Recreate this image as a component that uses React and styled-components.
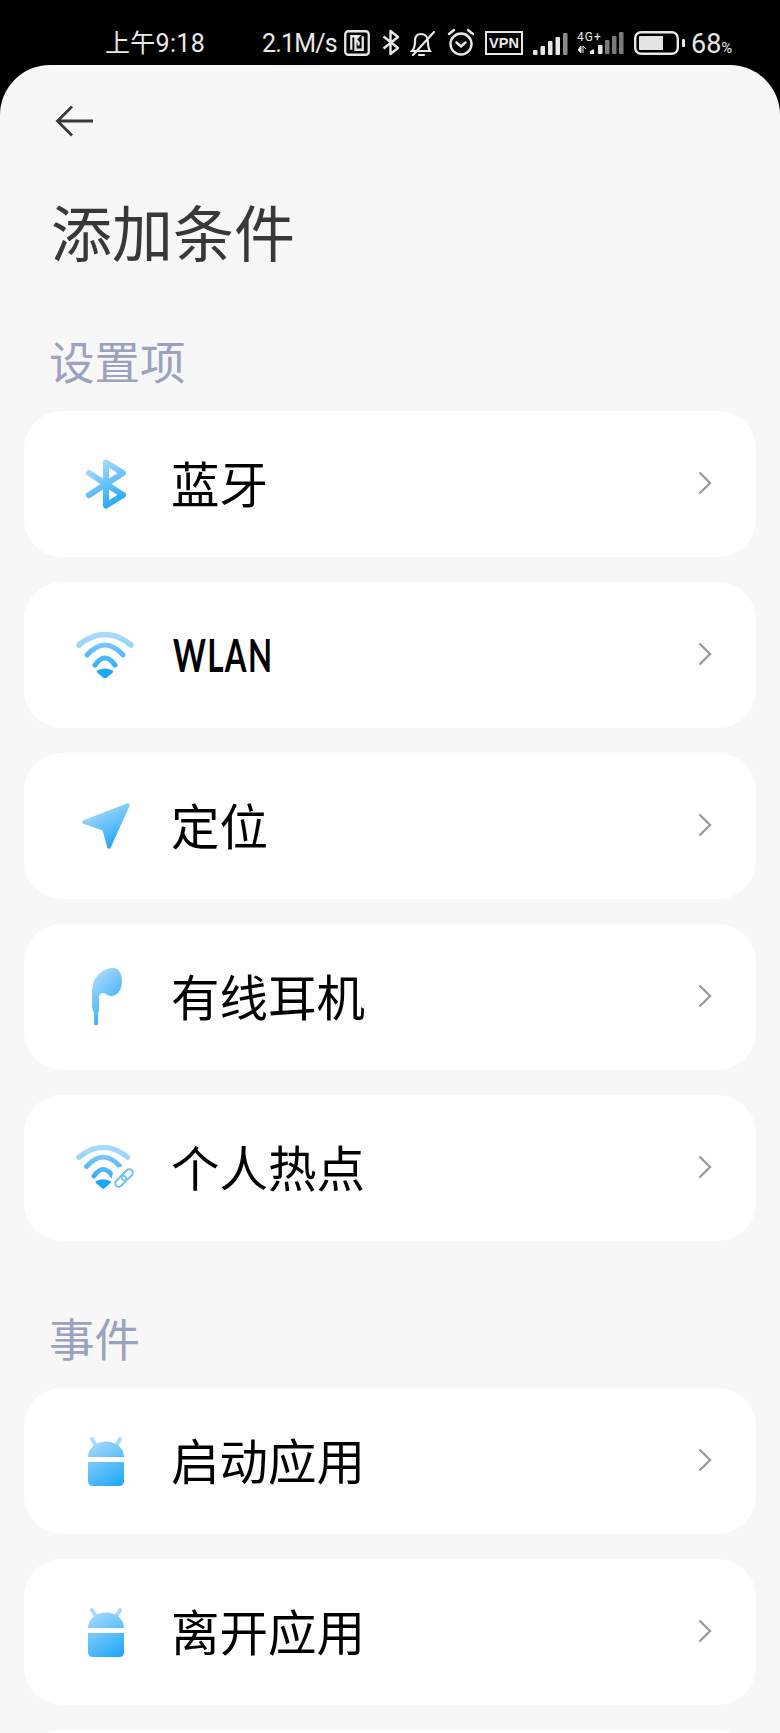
import React from 'react';
import styled, { createGlobalStyle } from 'styled-components';

const GlobalStyle = createGlobalStyle`
  html, body {
    margin: 0;
    padding: 0;
    background: #000;
    height: 1733px;
    overflow: hidden;
  }
  * { box-sizing: border-box; }
`;

const Page = styled.div`
  width: 780px;
  height: 1733px;
  overflow: hidden;
  background: #000;
  font-family: "Noto Sans CJK SC", "Noto Sans", sans-serif;
`;

const StatusBar = styled.div`
  height: 65px;
  padding: 28px 0 0 105px;
  display: flex;
  align-items: flex-start;
  color: #e8e8e8;
  font-family: Roboto, "Noto Sans CJK SC", sans-serif;
`;

const StatusText = styled.span`
  font-size: ${(p) => p.size || 25}px;
  line-height: 32px;
  width: ${(p) => p.width}px;
  margin-left: ${(p) => p.left || 0}px;
  letter-spacing: ${(p) => p.spacing || 0}px;
  white-space: nowrap;
`;

const SmallUnit = styled.small`
  font-size: 15px;
`;

const StatusIcon = styled.svg`
  display: block;
  flex: none;
  margin-left: ${(p) => p.left || 0}px;
  margin-top: ${(p) => p.top || 0}px;
`;

const VpnBox = styled.span`
  width: 38px;
  height: 24px;
  margin: 3px 0 0 10px;
  border: 2.5px solid #e8e8e8;
  display: flex;
  align-items: center;
  justify-content: center;
  font: 700 14.5px/1 "Liberation Sans", sans-serif;
`;

const Sheet = styled.main`
  background: #f7f7f7;
  border-radius: 50px 50px 0 0;
  padding: 40px 24px 0;
`;

const BackButton = styled.div`
  height: 30px;
  padding-left: 31px;
`;

const BackSvg = styled.svg`
  display: block;
`;

const Title = styled.h1`
  margin: 57px 0 0 27px;
  font-size: 61px;
  line-height: 78px;
  font-weight: 400;
  color: #383838;
`;

const SectionLabel = styled.h2`
  margin: ${(p) => p.top}px 0 0 25px;
  font-size: 45.5px;
  line-height: 60px;
  height: 60px;
  font-weight: 400;
  color: #9aa2bd;
`;

const CardList = styled.div`
  display: flex;
  flex-direction: column;
  gap: 25px;
  margin-top: 21px;
`;

const Card = styled.div`
  height: 146px;
  flex: none;
  background: #fff;
  border-radius: 38px;
  padding: 0 44px 0 40px;
  display: flex;
  align-items: center;
`;

const IconSlot = styled.div`
  width: 84px;
  flex: none;
  display: flex;
  justify-content: center;
  margin-right: 23px;
`;

const Label = styled.span`
  flex: 1;
  font-size: 48.5px;
  line-height: 60px;
  margin-bottom: 4px;
  color: #000;
`;

const LatinLabel = styled.span`
  display: inline-block;
  margin-left: 2px;
  font-family: Lato, sans-serif;
  font-weight: 700;
  font-size: 46px;
  transform: scaleX(0.68);
  transform-origin: left center;
  letter-spacing: 2px;
`;

const Chevron = styled.svg`
  display: block;
  flex: none;
  margin-bottom: 2px;
`;

const Gradient = ({ id }) => (
  <defs>
    <linearGradient id={id} x1="0.15" y1="0" x2="0.7" y2="1">
      <stop offset="0" stopColor="#b5defb" />
      <stop offset="1" stopColor="#1fa6fa" />
    </linearGradient>
  </defs>
);

const BluetoothIcon = () => (
  <svg width="42" height="50" viewBox="0 0 42 50">
    <defs>
      <linearGradient id="bt" gradientUnits="userSpaceOnUse" x1="8" y1="2" x2="30" y2="48">
        <stop offset="0" stopColor="#b5defb" />
        <stop offset="1" stopColor="#1fa6fa" />
      </linearGradient>
    </defs>
    <path d="M4 14 L38 36 L21 46.5 L21 3.5 L38 14 L4 36" fill="none" stroke="url(#bt)" strokeWidth="6" strokeLinecap="round" strokeLinejoin="round" />
  </svg>
);

const WifiArcs = ({ prefix }) => (
  <>
    <path d="M3 13 Q29 -8 55 13" fill="none" stroke={`url(#${prefix}a)`} strokeWidth="5.5" strokeLinecap="round" />
    <path d="M11 23 Q29 3 47 23" fill="none" stroke={`url(#${prefix}b)`} strokeWidth="5" strokeLinecap="round" />
    <path d="M19 33 Q29 19 39 33" fill="none" stroke={`url(#${prefix}b)`} strokeWidth="5" strokeLinecap="round" />
    <path d="M22 39.5 Q29 36 36 39.5 L29 45.5 Z" fill="#1fa6fa" stroke="#1fa6fa" strokeWidth="2.5" strokeLinejoin="round" />
  </>
);

const WifiGradients = ({ prefix }) => (
  <defs>
    <linearGradient id={`${prefix}a`} gradientUnits="userSpaceOnUse" x1="0" y1="0" x2="0" y2="22">
      <stop offset="0" stopColor="#a9dbfb" />
      <stop offset="1" stopColor="#8ccffb" />
    </linearGradient>
    <linearGradient id={`${prefix}b`} gradientUnits="userSpaceOnUse" x1="0" y1="8" x2="0" y2="36">
      <stop offset="0" stopColor="#82cbfb" />
      <stop offset="1" stopColor="#2fadfa" />
    </linearGradient>
  </defs>
);

const WifiIcon = () => (
  <svg width="60" height="46" viewBox="0 0 60 46">
    <WifiGradients prefix="wf" />
    <WifiArcs prefix="wf" />
  </svg>
);

const HotspotIcon = () => (
  <svg width="60" height="46" viewBox="0 0 60 46">
    <WifiGradients prefix="hs" />
    <g transform="scale(0.94)">
      <WifiArcs prefix="hs" />
    </g>
    <circle cx="48" cy="33" r="12" fill="#fff" />
    <g transform="rotate(-45 48 33)" fill="none" stroke="#6cc2fa" strokeWidth="2">
      <rect x="37" y="29.5" width="13" height="7" rx="3.5" />
      <rect x="46" y="29.5" width="13" height="7" rx="3.5" />
    </g>
  </svg>
);

const LocationIcon = () => (
  <svg width="50" height="48" viewBox="0 0 50 48">
    <Gradient id="loc" />
    <path d="M47 3 L3 20 L23 27 L28 45 Z" fill="url(#loc)" stroke="url(#loc)" strokeWidth="3.5" strokeLinejoin="round" />
  </svg>
);

const EarphoneIcon = () => (
  <svg width="32" height="58" viewBox="0 0 32 58">
    <Gradient id="ear" />
    <path d="M2 24 C2 9 12 0 23 0 C29 0 32 6 32 13 C32 22 27 28 21 28 C17 28 16 25 13 25 C10 25 9 27 9 31 L9 41 C9 43 8.5 44 8 45 L8 57 L4 57 L4 45 C3 43 2 41 2 38 Z" fill="url(#ear)" />
  </svg>
);

const AndroidIcon = ({ id }) => (
  <svg width="38" height="50" viewBox="0 0 38 50">
    <defs>
      <linearGradient id={id} gradientUnits="userSpaceOnUse" x1="4" y1="0" x2="34" y2="50">
        <stop offset="0" stopColor="#b5defb" />
        <stop offset="1" stopColor="#1fa6fa" />
      </linearGradient>
    </defs>
    <path d="M5 3 L8 8 M33 3 L30 8" fill="none" stroke="#a9dbfb" strokeWidth="4" strokeLinecap="round" />
    <path d="M1 21 C1 12 9 5.5 19 5.5 C29 5.5 37 12 37 21 Z" fill={`url(#${id})`} />
    <path d="M1 26 H37 V45 Q37 50 32 50 H6 Q1 50 1 45 Z" fill={`url(#${id})`} />
  </svg>
);

const ChevronIcon = () => (
  <Chevron width="14" height="24" viewBox="0 0 14 24">
    <path d="M1.5 1.5 L12 12 L1.5 22.5" fill="none" stroke="#9c9c9c" strokeWidth="2.4" />
  </Chevron>
);

const BackIcon = () => (
  <BackSvg width="38" height="32" viewBox="0 0 38 32">
    <path d="M38 16 H3 M17 1.5 L2.5 16 L17 30.5" fill="none" stroke="#3a3a3a" strokeWidth="2.8" />
  </BackSvg>
);

const Row = ({ icon, label, latin }) => (
  <Card>
    <IconSlot>{icon}</IconSlot>
    <Label>{latin ? <LatinLabel>{label}</LatinLabel> : label}</Label>
    <ChevronIcon />
  </Card>
);

const StatusIcons = () => (
  <>
    <StatusIcon left={0} top={2} width="26" height="26" viewBox="0 0 25 25" fill="none" stroke="#e8e8e8" strokeWidth="2.2">
      <rect x="1.2" y="1.2" width="22.6" height="22.6" rx="3" />
      <path d="M7 19 V6 H14 L11 9 M18 6 V19 H11 V9 L14 12 V15" />
    </StatusIcon>
    <StatusIcon left={12} top={1} width="18" height="27" viewBox="0 0 18 27" fill="none" stroke="#e8e8e8" strokeWidth="2.4" strokeLinejoin="round">
      <path d="M1.5 7.5 L16 19 L8.5 25 V2 L16 8 L1.5 19.5" />
    </StatusIcon>
    <StatusIcon left={10} top={2} width="26" height="27" viewBox="0 0 26 27" fill="none" stroke="#e8e8e8" strokeWidth="2.2" strokeLinecap="round">
      <path d="M2 21 H20 C18 18 18 15 18 12 C18 7 15 4 11 4 C7 4 5 7 5 11 C5 15 4 19 2 21 Z M9 25 H14 M3 25 L24 2" />
    </StatusIcon>
    <StatusIcon left={11} width="28" height="28" viewBox="0 0 28 28" fill="none" stroke="#e8e8e8" strokeWidth="2.4" strokeLinecap="round">
      <circle cx="14" cy="16" r="10.5" />
      <path d="M9.5 14.5 L14 18.5 L18.5 14.5 M2 6 L7 2 M26 6 L21 2" />
    </StatusIcon>
    <VpnBox>VPN</VpnBox>
    <StatusIcon left={10} top={4} width="36" height="24" viewBox="0 0 36 24">
      <rect x="0" y="18" width="4.5" height="5" rx="1" fill="#e8e8e8" />
      <rect x="7.5" y="14" width="4.5" height="9" rx="1" fill="#e8e8e8" />
      <rect x="15" y="9" width="4.5" height="14" rx="1" fill="#e8e8e8" />
      <rect x="22.5" y="5" width="4.5" height="18" rx="1" fill="#e8e8e8" />
      <rect x="30" y="1" width="4.5" height="22" rx="1" fill="#8a8a8a" />
    </StatusIcon>
    <StatusIcon left={8} top={3} width="49" height="24" viewBox="0 0 49 24">
      <text x="0" y="10" fontFamily="Roboto, sans-serif" fontSize="12" letterSpacing="1" fill="#e8e8e8">4G+</text>
      <path d="M4 15 V22 L1 19 Z M6 15 V22 M6 15 L9 18" fill="#e8e8e8" stroke="#e8e8e8" strokeWidth="1" />
      <path d="M13 23 V20 L17 18 V23 Z" fill="#e8e8e8" />
      <rect x="21" y="14" width="4.5" height="9" rx="1" fill="#e8e8e8" />
      <rect x="28" y="9" width="4.5" height="14" rx="1" fill="#7a7a7a" />
      <rect x="35" y="5" width="4.5" height="18" rx="1" fill="#7a7a7a" />
      <rect x="42" y="1" width="4.5" height="22" rx="1" fill="#7a7a7a" />
    </StatusIcon>
    <StatusIcon left={8} top={3} width="51" height="24" viewBox="0 0 51 24">
      <rect x="1.2" y="1.2" width="42.6" height="21.6" rx="6" fill="none" stroke="#e8e8e8" strokeWidth="2.4" />
      <path d="M6 5 H29 V19 H6 Q5 19 5 18 V6 Q5 5 6 5 Z" fill="#e4e4e4" />
      <rect x="48" y="8" width="3" height="8" rx="1" fill="#e8e8e8" />
    </StatusIcon>
    <StatusText size={27} width={40} left={6}>68<SmallUnit>%</SmallUnit></StatusText>
  </>
);

const settings = [
  { label: '蓝牙', icon: <BluetoothIcon /> },
  { label: 'WLAN', icon: <WifiIcon />, latin: true },
  { label: '定位', icon: <LocationIcon /> },
  { label: '有线耳机', icon: <EarphoneIcon /> },
  { label: '个人热点', icon: <HotspotIcon /> },
];

const events = [
  { label: '启动应用', icon: <AndroidIcon id="and1" /> },
  { label: '离开应用', icon: <AndroidIcon id="and2" /> },
];

const App = () => (
  <Page>
    <GlobalStyle />
    <StatusBar>
      <StatusText width={157} spacing={0.3}>上午9:18</StatusText>
      <StatusText width={82} spacing={-0.8}>2.1M/s</StatusText>
      <StatusIcons />
    </StatusBar>
    <Sheet>
      <BackButton>
        <BackIcon />
      </BackButton>
      <Title>添加条件</Title>
      <SectionLabel top={60}>设置项</SectionLabel>
      <CardList>
        {settings.map((item) => (
          <Row key={item.label} {...item} />
        ))}
      </CardList>
      <SectionLabel top={66}>事件</SectionLabel>
      <CardList>
        {events.map((item) => (
          <Row key={item.label} {...item} />
        ))}
        <Card />
      </CardList>
    </Sheet>
  </Page>
);

export default App;
